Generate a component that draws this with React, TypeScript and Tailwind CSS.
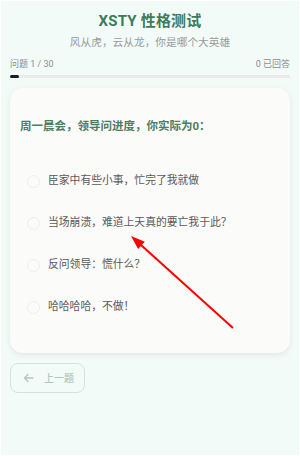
import React, { useState } from 'react';

const options = [
  '臣家中有些小事，忙完了我就做',
  '当场崩溃，难道上天真的要亡我于此？',
  '反问领导：慌什么？',
  '哈哈哈哈，不做！',
];

export default function App() {
  const [picked, setPicked] = useState<number | null>(null);

  return (
    <div
      className="relative w-[300px] h-[456px] overflow-hidden bg-[#f2fbf7] border border-white"
      style={{ fontFamily: 'Roboto, "Noto Sans CJK SC", sans-serif' }}
    >
      <div className="px-[9px]">
        <div className="pt-[9px] flex flex-col items-center">
          <h1 className="text-[15px] leading-[22px] font-bold text-[#3d7b5b] tracking-[0.2px]">XSTY 性格测试</h1>
          <p className="mt-[2px] text-[10.7px] leading-[18px] text-[#9a9a9a]">风从虎，云从龙，你是哪个大英雄</p>
        </div>

        <div className="mt-[5px] flex justify-between text-[9px] leading-[14px] text-[#8d8d8d]">
          <span>问题 1 / 30</span>
          <span>0 已回答</span>
        </div>
        <div className="mt-[4px] h-[3px] rounded-full bg-[#e9ebea]">
          <div className="h-full w-[9px] rounded-full bg-[#1c1c1c]" />
        </div>

        <div className="mt-[10px] rounded-[13px] bg-[#fbfbf9] shadow-[0_2px_6px_rgba(0,0,0,0.08)] px-[10px] pt-[30px] pb-[25px]">
          <h2 className="text-[11.5px] leading-[16px] font-bold text-[#4d7c63]">周一晨会，领导问进度，你实际为0：</h2>
          <div className="mt-[26px] flex flex-col">
            {options.map((o, i) => (
              <button
                key={o}
                onClick={() => setPicked(i)}
                className="h-[42px] flex items-center gap-[8px] pl-[7px] text-left"
              >
                <span
                  className={
                    'w-[13px] h-[13px] rounded-full border ' +
                    (picked === i ? 'border-[#3d7b5b] bg-[#3d7b5b]' : 'border-[#eeeeec] bg-[#fbfbf9]')
                  }
                />
                <span className="text-[10.8px] text-[#5a5a5a]">{o}</span>
              </button>
            ))}
          </div>
        </div>

        <button className="mt-[10px] w-[75px] h-[30px] flex items-center gap-[10px] pl-[12px] rounded-[8px] border border-[#d3e3db] text-[#b3c8bd]">
          <svg width="11" height="10" viewBox="0 0 11 10" fill="none" stroke="currentColor" strokeWidth="1.4" strokeLinecap="round" strokeLinejoin="round">
            <path d="M10 5H1.5M5 1.5L1.5 5L5 8.5" />
          </svg>
          <span className="text-[10px] font-medium">上一题</span>
        </button>
      </div>

      <svg className="absolute left-0 top-0 pointer-events-none" width="300" height="456" viewBox="0 0 300 456">
        <line x1="232" y1="327" x2="140" y2="244" stroke="#ff0000" strokeWidth="2" />
        <polygon points="130,235 143.8,240.7 137.1,248.1" fill="#ff0000" />
      </svg>
    </div>
  );
}
